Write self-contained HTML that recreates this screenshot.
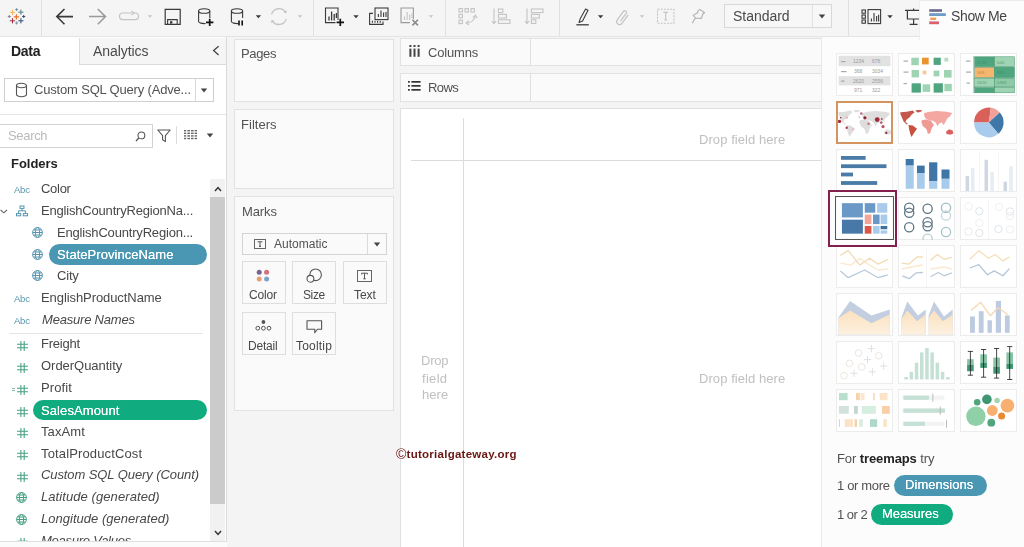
<!DOCTYPE html>
<html>
<head>
<meta charset="utf-8">
<title>Tableau - Treemap</title>
<style>
*{box-sizing:border-box;margin:0;padding:0}
html,body{width:1024px;height:547px;overflow:hidden;background:#f4f4f4;font-family:"Liberation Sans",sans-serif;color:#333;font-size:13px}
.abs{position:absolute}
.t{position:absolute;white-space:nowrap;line-height:16px;will-change:transform}
#toolbar{position:absolute;left:0;top:0;width:1024px;height:37px;background:#f5f5f5;border-bottom:1px solid #e4e4e4}
.tsep{position:absolute;top:0;width:1px;height:36px;background:#e0e0e0}
#left{position:absolute;left:0;top:37px;width:227px;height:505px;background:#fff;border-right:1px solid #dadada;border-bottom:1px solid #e0e0e0;overflow:hidden}
.card{position:absolute;background:#fafafa;border:1px solid #e2e2e2}
.mbtn{position:absolute;border:1px solid #dedede;background:#fafafa}
.pill{position:absolute;border-radius:11px}
</style>
</head>
<body>
<div id="toolbar">
<div class="tsep" style="left:41px"></div>
<div class="tsep" style="left:313px"></div>
<div class="tsep" style="left:445px"></div>
<div class="tsep" style="left:559px"></div>
<div class="tsep" style="left:848px"></div>
<svg class="abs" style="left:0;top:0" width="1024" height="38"><path d="M13.799999999999999,16.8 h5.2 M16.4,14.200000000000001 v5.2" stroke="#e8762c" stroke-width="1.2" fill="none"/><path d="M15.100000000000001,9.6 h3.0 M16.6,8.1 v3.0" stroke="#7b93a4" stroke-width="1" fill="none"/><path d="M15.100000000000001,23 h3.0 M16.6,21.5 v3.0" stroke="#7b93a4" stroke-width="1" fill="none"/><path d="M7.800000000000001,16.5 h3.0 M9.3,15.0 v3.0" stroke="#8a8098" stroke-width="1" fill="none"/><path d="M22.2,16.5 h3.0 M23.7,15.0 v3.0" stroke="#3a4a6a" stroke-width="1" fill="none"/><path d="M9.9,12.4 h5.2 M12.5,9.8 v5.2" stroke="#f0b860" stroke-width="1" fill="none"/><path d="M18.299999999999997,12.2 h5.2 M20.9,9.6 v5.2" stroke="#4f7f80" stroke-width="1" fill="none"/><path d="M9.9,20.8 h5.2 M12.5,18.2 v5.2" stroke="#9a3040" stroke-width="1" fill="none"/><path d="M18.299999999999997,20.8 h5.2 M20.9,18.2 v5.2" stroke="#2f4a6e" stroke-width="1" fill="none"/><path d="M73,16.6 H57 M64.5,9 L56.8,16.6 L64.5,24.2" fill="none" stroke="#3a3a3a" stroke-width="1.6"/><path d="M89,16.6 H105.2 M97.8,9 L105.5,16.6 L97.8,24.2" fill="none" stroke="#9a9a9a" stroke-width="1.5"/><rect x="119.5" y="13" width="19" height="6.6" rx="3.3" fill="none" stroke="#c4c4c4" stroke-width="1.2"/><path d="M131.5,10.8 l2.6,2.2 l-2.6,2.2" fill="none" stroke="#c4c4c4" stroke-width="1.1"/><path d="M147.8,15.200000000000001 h4.4 l-2.2,2.6 z" fill="#c4c4c4"/><path d="M165.2,9.3 h15 v15 h-15 z" fill="none" stroke="#3a3a3a" stroke-width="1.2"/><path d="M167.6,24 v-4.4 h9.6 v4.4" fill="none" stroke="#3a3a3a" stroke-width="1.1"/><rect x="170" y="21.2" width="2.4" height="2.4" fill="#3a3a3a"/><path d="M198.6,11 v10.5 a5.6,2.2 0 0 0 7,2" fill="none" stroke="#3a3a3a" stroke-width="1.1"/><path d="M209.79999999999998,11 v7" fill="none" stroke="#3a3a3a" stroke-width="1.1"/><ellipse cx="204.2" cy="11" rx="5.6" ry="2.3" fill="none" stroke="#3a3a3a" stroke-width="1.1"/><path d="M206,22.4 h7.4 M209.7,18.7 v7.4" stroke="#111" stroke-width="1.7" fill="none"/><path d="M231.4,11 v10.5 a5.6,2.2 0 0 0 7,2" fill="none" stroke="#3a3a3a" stroke-width="1.1"/><path d="M242.6,11 v7" fill="none" stroke="#3a3a3a" stroke-width="1.1"/><ellipse cx="237.0" cy="11" rx="5.6" ry="2.3" fill="none" stroke="#3a3a3a" stroke-width="1.1"/><path d="M239,20.4 v5.2 M242.2,20.4 v5.2" stroke="#111" stroke-width="1.6" fill="none"/><path d="M255.7,15.200000000000001 h5.4 l-2.7,3.1 z" fill="#3a3a3a"/><path d="M271.6,14.4 A7.6,7.6 0 0 1 285.6,12.6" fill="none" stroke="#c4c4c4" stroke-width="1.3"/><path d="M286.2,18.8 A7.6,7.6 0 0 1 272.2,20.6" fill="none" stroke="#c4c4c4" stroke-width="1.3"/><path d="M283.2,12 l3,1.4 l0.6,-3.2 z M274.6,21.2 l-3,-1.4 l-0.6,3.2 z" fill="#c4c4c4"/><path d="M297.8,15.200000000000001 h4.4 l-2.2,2.6 z" fill="#c4c4c4"/><path d="M338,20 V8 H325.5 V22.6 H335.5" fill="none" stroke="#3a3a3a" stroke-width="1.1"/><path d="M329,20.4 v-4 M331.6,20.4 v-9 M334.2,20.4 v-6.4 M336.4,18 v-5" stroke="#3a3a3a" stroke-width="1.3" fill="none"/><path d="M336.6,22.4 h7.4 M340.3,18.7 v7.4" stroke="#111" stroke-width="1.7" fill="none"/><path d="M353.3,15.200000000000001 h5.4 l-2.7,3.1 z" fill="#3a3a3a"/><rect x="375" y="8" width="13" height="11.6" fill="#f5f5f5" stroke="#3a3a3a" stroke-width="1.1"/><path d="M378.4,17 v-3 M381,17 v-6.4 M383.6,17 v-4.4 M386,17 v-5" stroke="#3a3a3a" stroke-width="1.1"/><path d="M373,13.4 h-3.4 v11 h13.4 v-3" fill="none" stroke="#3a3a3a" stroke-width="1.1"/><path d="M372.4,22.8 v-2 M375,22.8 v-2 M377.6,22.8 v-2 M380.2,22.8 v-2" stroke="#3a3a3a" stroke-width="1.1"/><path d="M413.4,19 V8 H401 V22.6 H410" fill="none" stroke="#9a9a9a" stroke-width="1.1"/><path d="M404.5,20 v-3.5 M407.1,20 v-8 M409.7,20 v-5.5 M412,18 v-4.5" stroke="#c4c4c4" stroke-width="1.1" fill="none"/><path d="M412.4,19.8 l5.6,5.6 M418,19.8 l-5.6,5.6" stroke="#8a8a8a" stroke-width="1.6" fill="none"/><path d="M428.8,15.200000000000001 h4.4 l-2.2,2.6 z" fill="#c4c4c4"/><g fill="none" stroke="#c4c4c4" stroke-width="1.1"><rect x="459" y="8.6" width="3.4" height="3.4"/><rect x="465" y="8.6" width="3.4" height="3.4"/><rect x="471" y="8.6" width="3.4" height="3.4"/><rect x="459" y="14.4" width="3.4" height="3.4"/><rect x="459" y="20.2" width="3.4" height="3.4"/><path d="M466.5,23 q7.5,-0.5 8.8,-7.5"/><path d="M472.8,17.6 l2.6,-2.4 l1.8,3 M468.8,20.6 l-2.6,2.4 l2.8,2"/></g><g fill="none" stroke="#c4c4c4" stroke-width="1.1"><path d="M494,8.6 V23.4 M491.8,21 l2.2,2.6 l2.2,-2.6"/><rect x="498.4" y="9" width="4.4" height="3.6"/><rect x="498.4" y="14.4" width="8" height="3.6"/><rect x="498.4" y="19.8" width="11.6" height="3.6"/></g><g fill="none" stroke="#c4c4c4" stroke-width="1.1"><path d="M527,8.6 V23.4 M524.8,21 l2.2,2.6 l2.2,-2.6"/><rect x="531.4" y="9" width="11.6" height="3.6"/><rect x="531.4" y="14.4" width="8" height="3.6"/><rect x="531.4" y="19.8" width="4.4" height="3.6"/></g><path d="M585.6,9 l2.4,1.2 l-5.4,10.8 l-3.6,1.4 l1.2,-3.6 z" fill="none" stroke="#3a3a3a" stroke-width="1.1" stroke-linejoin="round"/><path d="M576.4,24.8 h12.4" stroke="#3a3a3a" stroke-width="1.3"/><path d="M597.9,15.200000000000001 h5.4 l-2.7,3.1 z" fill="#3a3a3a"/><path d="M621.2,21.2 l4.6,-8.4 a1.7,1.7 0 0 0 -3,-1.6 l-5,9.2 a2.9,2.9 0 0 0 5.2,2.8 l5,-9.2" fill="none" stroke="#c4c4c4" stroke-width="1.2" transform="rotate(8 622 16)"/><path d="M639.8,15.200000000000001 h4.4 l-2.2,2.6 z" fill="#c4c4c4"/><rect x="657.5" y="9.2" width="16.4" height="14" fill="none" stroke="#c4c4c4" stroke-width="1.1" stroke-dasharray="2 1.2"/><path d="M663.4,12.4 h4.6 M665.7,12.4 v7.6 M664.2,20 h3" stroke="#c4c4c4" stroke-width="1.1" fill="none"/><path d="M699.8,9.4 l4.8,3.4 l-1.6,1 l-1.6,4.6 l-5.8,-0.4 l-2.4,-2.6 l4.2,-2.6 l0.8,-2.2 z M695.6,17.6 l-3.4,5.6" fill="none" stroke="#b0b0b0" stroke-width="1.1" stroke-linejoin="round"/><g fill="none" stroke="#3a3a3a" stroke-width="1.1"><rect x="862" y="10" width="3.4" height="3.2"/><rect x="862" y="15" width="3.4" height="3.2"/><rect x="862" y="20" width="3.4" height="3.2"/><rect x="868" y="9.6" width="12.6" height="14"/><path d="M871.4,21.4 v-3 M874,21.4 v-8.4 M876.6,21.4 v-5.4 M878.6,21.4 v-6.6"/></g><path d="M887.3,15.200000000000001 h5.4 l-2.7,3.1 z" fill="#3a3a3a"/><g fill="none" stroke="#3a3a3a" stroke-width="1.2"><path d="M905,10.4 h17 M907.4,10.4 v8.6 h14 M913.6,8.6 v1.8 M913.6,19 v5 M909.6,24.4 h8"/></g></svg>
<div class="abs" style="left:724px;top:4px;width:108px;height:24px;border:1px solid #d8d8d8;background:#f7f7f7"></div>
<div class="abs" style="left:812px;top:5px;width:1px;height:22px;background:#e2e2e2"></div>
<div class="t" style="left:732.7px;top:8.1px;font-size:14px;color:#4a4a4a;letter-spacing:-0.03px;">Standard</div>
<svg class="abs" style="left:818px;top:14.0px" width="8" height="5" viewBox="0 0 8 5"><path d="M0.8,0.4 h6.4 l-3.2,4 z" fill="#444"/></svg></div>
<div id="left">
<div class="abs" style="left:79px;top:1px;width:147px;height:27px;background:#f5f5f5;border-left:1px solid #dcdcdc;border-bottom:1px solid #dcdcdc"></div>
<div class="t" style="left:11.2px;top:5.9px;font-size:14px;color:#222;letter-spacing:-0.29px;font-weight:bold;">Data</div>
<div class="t" style="left:93.2px;top:5.9px;font-size:14px;color:#4a4a4a;letter-spacing:-0.06px;">Analytics</div>
<svg class="abs" style="left:211px;top:8px" width="10" height="12" viewBox="0 0 10 12"><path d="M7.6 1.2 L2.6 5.6 L7.6 10" fill="none" stroke="#444" stroke-width="1.3"/></svg>
<div class="abs" style="left:4px;top:41px;width:210px;height:24px;border:1px solid #cfcfcf;background:#fff"></div>
<div class="abs" style="left:195px;top:42px;width:1px;height:22px;background:#d8d8d8"></div>
<svg class="abs" style="left:15px;top:45px" width="13" height="16" viewBox="0 0 13 16"><path d="M1.5 3.5 v9 a5 2.2 0 0 0 10 0 v-9" fill="none" stroke="#555" stroke-width="1.1"/><ellipse cx="6.5" cy="3.5" rx="5" ry="2.2" fill="none" stroke="#555" stroke-width="1.1"/></svg>
<div class="t" style="left:33.7px;top:45.0px;font-size:13px;color:#525252;letter-spacing:-0.18px;">Custom SQL Query (Adve...</div>
<svg class="abs" style="left:200px;top:51.0px" width="8" height="5" viewBox="0 0 8 5"><path d="M0.8,0.4 h6.4 l-3.2,4 z" fill="#444"/></svg>
<div class="abs" style="left:0;top:77px;width:226px;height:1px;background:#e4e4e4"></div>
<div class="abs" style="left:-1px;top:87px;width:154px;height:24px;border:1px solid #d2d2d2;background:#fff"></div>
<div class="t" style="left:7.9px;top:90.8px;font-size:13px;color:#bababa;letter-spacing:-0.32px;">Search</div>
<svg class="abs" style="left:135px;top:94px" width="11" height="11" viewBox="0 0 11 11"><circle cx="6.4" cy="4.4" r="3.4" fill="none" stroke="#555" stroke-width="1.1"/><path d="M4 6.8 L1 10" stroke="#555" stroke-width="1.3"/></svg>
<svg class="abs" style="left:157px;top:91.5px" width="14" height="14" viewBox="0 0 14 14"><path d="M0.8 1 h12.4 l-4.8 5.6 v6 l-2.8 -1.8 v-4.2 z" fill="none" stroke="#555" stroke-width="1.1" stroke-linejoin="round"/></svg>
<div class="abs" style="left:176px;top:89px;width:1px;height:18px;background:#dcdcdc"></div>
<svg class="abs" style="left:184px;top:93.4px" width="13" height="10" viewBox="0 0 13 10"><g fill="#666"><rect x="0" y="0.0" width="2.2" height="1.4"/><rect x="3.4" y="0.0" width="2.6" height="1.4"/><rect x="7" y="0.0" width="2.6" height="1.4"/><rect x="10.6" y="0.0" width="2.4" height="1.4"/><rect x="0" y="2.6" width="2.2" height="1.4"/><rect x="3.4" y="2.6" width="2.6" height="1.4"/><rect x="7" y="2.6" width="2.6" height="1.4"/><rect x="10.6" y="2.6" width="2.4" height="1.4"/><rect x="0" y="5.2" width="2.2" height="1.4"/><rect x="3.4" y="5.2" width="2.6" height="1.4"/><rect x="7" y="5.2" width="2.6" height="1.4"/><rect x="10.6" y="5.2" width="2.4" height="1.4"/><rect x="0" y="7.800000000000001" width="2.2" height="1.4"/><rect x="3.4" y="7.800000000000001" width="2.6" height="1.4"/><rect x="7" y="7.800000000000001" width="2.6" height="1.4"/><rect x="10.6" y="7.800000000000001" width="2.4" height="1.4"/></g></svg>
<svg class="abs" style="left:206px;top:95.80000000000001px" width="8" height="5" viewBox="0 0 8 5"><path d="M0.8,0.4 h6.4 l-3.2,4 z" fill="#444"/></svg>
<div class="t" style="left:11.2px;top:119.3px;font-size:13px;color:#222;letter-spacing:-0.02px;font-weight:bold;">Folders</div>
<div class="abs" style="left:209.7px;top:142px;width:15px;height:363px;background:#f1f1f1"></div>
<div class="abs" style="left:209.7px;top:159.7px;width:15px;height:307.6px;background:#cbcbcb"></div>
<svg class="abs" style="left:213px;top:147.5px" width="10" height="8" viewBox="0 0 10 8"><path d="M2 6 L5 2.6 L8 6" fill="none" stroke="#333" stroke-width="1.5"/></svg>
<svg class="abs" style="left:213px;top:491.5px" width="10" height="8" viewBox="0 0 10 8"><path d="M2 2 L5 5.4 L8 2" fill="none" stroke="#333" stroke-width="1.5"/></svg>
<div class="t" style="left:13.9px;top:144.9px;font-size:9.5px;color:#5795ae;letter-spacing:-0.23px;">Abc</div>
<div class="t" style="left:41.1px;top:144.0px;font-size:13px;color:#484848;letter-spacing:-0.28px;">Color</div>
<svg class="abs" style="left:-0.5px;top:172.2px" width="8" height="6" viewBox="0 0 8 6"><path d="M0.6 1 L3.8 3.8 L7 1" fill="none" stroke="#666" stroke-width="1.1"/></svg>
<svg class="abs" style="left:15.5px;top:168.2px" width="12" height="12" viewBox="0 0 12 12"><g fill="none" stroke="#5795ae" stroke-width="1"><rect x="4" y="1" width="4" height="2.4"/><rect x="0.5" y="8.6" width="4.2" height="2.2"/><rect x="7.3" y="8.6" width="4.2" height="2.2"/><path d="M6 3.4 v2.4 M2.6 8.6 v-2.8 h6.8 v2.8"/></g></svg>
<div class="t" style="left:41.1px;top:165.8px;font-size:13px;color:#484848;letter-spacing:-0.19px;">EnglishCountryRegionNa...</div>
<svg class="abs" style="left:31.8px;top:189.9px" width="11" height="11" viewBox="0 0 11 11"><g fill="none" stroke="#5795ae" stroke-width="1"><circle cx="5.5" cy="5.5" r="4.9"/><ellipse cx="5.5" cy="5.5" rx="2.1" ry="4.9"/><path d="M0.6 5.5 h9.8 M1.5 3 h8 M1.5 8 h8"/></g></svg>
<div class="t" style="left:56.6px;top:187.5px;font-size:13px;color:#484848;letter-spacing:-0.18px;">EnglishCountryRegion...</div>
<div class="pill" style="left:49px;top:207.4px;width:158px;height:20.4px;background:#4a97b4"></div>
<svg class="abs" style="left:31.8px;top:211.9px" width="11" height="11" viewBox="0 0 11 11"><g fill="none" stroke="#5795ae" stroke-width="1"><circle cx="5.5" cy="5.5" r="4.9"/><ellipse cx="5.5" cy="5.5" rx="2.1" ry="4.9"/><path d="M0.6 5.5 h9.8 M1.5 3 h8 M1.5 8 h8"/></g></svg>
<div class="t" style="left:56.6px;top:209.5px;font-size:13px;color:#fff;letter-spacing:0.05px;text-shadow:0 0 0.4px #fff;">StateProvinceName</div>
<svg class="abs" style="left:31.8px;top:233.3px" width="11" height="11" viewBox="0 0 11 11"><g fill="none" stroke="#5795ae" stroke-width="1"><circle cx="5.5" cy="5.5" r="4.9"/><ellipse cx="5.5" cy="5.5" rx="2.1" ry="4.9"/><path d="M0.6 5.5 h9.8 M1.5 3 h8 M1.5 8 h8"/></g></svg>
<div class="t" style="left:56.6px;top:230.9px;font-size:13px;color:#484848;letter-spacing:-0.20px;">City</div>
<div class="t" style="left:13.9px;top:253.6px;font-size:9.5px;color:#5795ae;letter-spacing:-0.23px;">Abc</div>
<div class="t" style="left:41.1px;top:252.7px;font-size:13px;color:#484848;letter-spacing:-0.08px;">EnglishProductName</div>
<div class="t" style="left:13.9px;top:276.0px;font-size:9.5px;color:#5795ae;letter-spacing:-0.23px;">Abc</div>
<div class="t" style="left:41.5px;top:275.1px;font-size:13px;color:#484848;letter-spacing:-0.20px;font-style:italic;">Measure Names</div>
<svg class="abs" style="left:16.5px;top:303.9px" width="11" height="10" viewBox="0 0 11 10"><path d="M3.9 0 v10 M7.2 0 v10 M0 3.2 h11 M0 6.7 h11" fill="none" stroke="#45a081" stroke-width="1.05"/></svg>
<div class="t" style="left:41.1px;top:299.4px;font-size:13px;color:#484848;letter-spacing:-0.21px;">Freight</div>
<svg class="abs" style="left:16.5px;top:325.9px" width="11" height="10" viewBox="0 0 11 10"><path d="M3.9 0 v10 M7.2 0 v10 M0 3.2 h11 M0 6.7 h11" fill="none" stroke="#45a081" stroke-width="1.05"/></svg>
<div class="t" style="left:41.1px;top:321.4px;font-size:13px;color:#484848;letter-spacing:-0.03px;">OrderQuantity</div>
<div class="abs" style="left:12px;top:351.1px;width:2.8px;height:1px;background:#8ab8a8"></div>
<div class="abs" style="left:12px;top:353.1px;width:2.8px;height:1px;background:#8ab8a8"></div>
<svg class="abs" style="left:16.5px;top:347.5px" width="11" height="10" viewBox="0 0 11 10"><path d="M3.9 0 v10 M7.2 0 v10 M0 3.2 h11 M0 6.7 h11" fill="none" stroke="#45a081" stroke-width="1.05"/></svg>
<div class="t" style="left:41.1px;top:343.0px;font-size:13px;color:#484848;letter-spacing:0.08px;">Profit</div>
<div class="pill" style="left:33px;top:363.0px;width:174px;height:20.4px;background:#10ab7e"></div>
<svg class="abs" style="left:16.5px;top:370.3px" width="11" height="10" viewBox="0 0 11 10"><path d="M3.9 0 v10 M7.2 0 v10 M0 3.2 h11 M0 6.7 h11" fill="none" stroke="#45a081" stroke-width="1.05"/></svg>
<div class="t" style="left:40.9px;top:365.8px;font-size:13px;color:#fff;letter-spacing:0.10px;text-shadow:0 0 0.4px #fff;">SalesAmount</div>
<svg class="abs" style="left:16.5px;top:391.0px" width="11" height="10" viewBox="0 0 11 10"><path d="M3.9 0 v10 M7.2 0 v10 M0 3.2 h11 M0 6.7 h11" fill="none" stroke="#45a081" stroke-width="1.05"/></svg>
<div class="t" style="left:40.9px;top:386.5px;font-size:13px;color:#484848;letter-spacing:0.11px;">TaxAmt</div>
<svg class="abs" style="left:16.5px;top:413.1px" width="11" height="10" viewBox="0 0 11 10"><path d="M3.9 0 v10 M7.2 0 v10 M0 3.2 h11 M0 6.7 h11" fill="none" stroke="#45a081" stroke-width="1.05"/></svg>
<div class="t" style="left:40.9px;top:408.6px;font-size:13px;color:#484848;letter-spacing:0.14px;">TotalProductCost</div>
<svg class="abs" style="left:16.5px;top:434.7px" width="11" height="10" viewBox="0 0 11 10"><path d="M3.9 0 v10 M7.2 0 v10 M0 3.2 h11 M0 6.7 h11" fill="none" stroke="#45a081" stroke-width="1.05"/></svg>
<div class="t" style="left:41.4px;top:430.2px;font-size:13px;color:#484848;letter-spacing:-0.09px;font-style:italic;">Custom SQL Query (Count)</div>
<svg class="abs" style="left:16.2px;top:454.6px" width="11" height="11" viewBox="0 0 11 11"><g fill="none" stroke="#45a081" stroke-width="1"><circle cx="5.5" cy="5.5" r="4.9"/><ellipse cx="5.5" cy="5.5" rx="2.1" ry="4.9"/><path d="M0.6 5.5 h9.8 M1.5 3 h8 M1.5 8 h8"/></g></svg>
<div class="t" style="left:41.4px;top:452.2px;font-size:13px;color:#484848;letter-spacing:0.08px;font-style:italic;">Latitude (generated)</div>
<svg class="abs" style="left:16.2px;top:476.5px" width="11" height="11" viewBox="0 0 11 11"><g fill="none" stroke="#45a081" stroke-width="1"><circle cx="5.5" cy="5.5" r="4.9"/><ellipse cx="5.5" cy="5.5" rx="2.1" ry="4.9"/><path d="M0.6 5.5 h9.8 M1.5 3 h8 M1.5 8 h8"/></g></svg>
<div class="t" style="left:41.4px;top:474.1px;font-size:13px;color:#484848;letter-spacing:0.02px;font-style:italic;">Longitude (generated)</div>
<svg class="abs" style="left:16.5px;top:500.6px" width="11" height="10" viewBox="0 0 11 10"><path d="M3.9 0 v10 M7.2 0 v10 M0 3.2 h11 M0 6.7 h11" fill="none" stroke="#45a081" stroke-width="1.05"/></svg>
<div class="t" style="left:41.4px;top:496.1px;font-size:13px;color:#484848;letter-spacing:-0.25px;font-style:italic;">Measure Values</div>
<div class="abs" style="left:8.5px;top:296px;width:194px;height:1px;background:#e4e4e4"></div></div>
<div class="abs" style="left:0;top:542px;width:227px;height:5px;background:#fbfbfb"></div>
<div class="card" style="left:234px;top:39px;width:160px;height:63px"></div>
<div class="t" style="left:241.3px;top:45.5px;font-size:13px;color:#525252;letter-spacing:-0.35px;">Pages</div>
<div class="card" style="left:234px;top:109px;width:160px;height:80px"></div>
<div class="t" style="left:241.3px;top:116.5px;font-size:13px;color:#525252;letter-spacing:0.03px;">Filters</div>
<div class="card" style="left:234px;top:196px;width:160px;height:215px"></div>
<div class="t" style="left:241.8px;top:203.7px;font-size:13px;color:#525252;letter-spacing:-0.12px;">Marks</div>
<div class="abs" style="left:241.5px;top:233px;width:145px;height:21.5px;border:1px solid #d4d4d4;background:#fafafa"></div>
<div class="abs" style="left:366.5px;top:234px;width:1px;height:19.5px;background:#dadada"></div>
<svg class="abs" style="left:254px;top:239px" width="12" height="10" viewBox="0 0 12 10"><rect x="0.5" y="0.5" width="11" height="9" fill="none" stroke="#666" stroke-width="1"/><path d="M3.6 2.8 h4.8 M6 2.8 v4.6 M5 7.4 h2" stroke="#555" stroke-width="1" fill="none"/></svg>
<div class="t" style="left:273.5px;top:235.7px;font-size:12px;color:#525252;letter-spacing:0.02px;">Automatic</div>
<svg class="abs" style="left:372.7px;top:241.9px" width="8" height="5" viewBox="0 0 8 5"><path d="M0.8,0.4 h6.4 l-3.2,4 z" fill="#444"/></svg>
<div class="mbtn" style="left:241.5px;top:261px;width:44.5px;height:43px"></div>
<div class="mbtn" style="left:292px;top:261px;width:44px;height:43px"></div>
<div class="mbtn" style="left:342.5px;top:261px;width:44px;height:43px"></div>
<div class="mbtn" style="left:241.5px;top:311.5px;width:44.5px;height:43px"></div>
<div class="mbtn" style="left:292px;top:311.5px;width:44px;height:43px"></div>
<div class="t" style="left:248.6px;top:287.3px;font-size:12px;color:#484848;letter-spacing:-0.14px;">Color</div>
<div class="t" style="left:303.0px;top:287.3px;font-size:12px;color:#484848;letter-spacing:-0.39px;">Size</div>
<div class="t" style="left:353.7px;top:287.3px;font-size:12px;color:#484848;letter-spacing:-0.08px;">Text</div>
<div class="t" style="left:248.0px;top:337.6px;font-size:12px;color:#484848;letter-spacing:-0.20px;">Detail</div>
<div class="t" style="left:295.9px;top:337.6px;font-size:12px;color:#484848;letter-spacing:0.19px;">Tooltip</div>
<svg class="abs" style="left:256px;top:268.6px" width="14" height="13" viewBox="0 0 14 13"><circle cx="3.2" cy="3.2" r="2.5" fill="#74648f"/><circle cx="10.6" cy="3.2" r="2.5" fill="#d4717c"/><circle cx="3.2" cy="9.9" r="2.5" fill="#e8a070"/><circle cx="10.6" cy="9.9" r="2.5" fill="#7ba3cb"/></svg>
<svg class="abs" style="left:305.5px;top:267.5px" width="17" height="16" viewBox="0 0 17 16"><circle cx="9.6" cy="6.8" r="5.8" fill="none" stroke="#555" stroke-width="1.1"/><circle cx="4.4" cy="10.8" r="3.4" fill="#fafafa" stroke="#555" stroke-width="1.1"/></svg>
<svg class="abs" style="left:356.5px;top:269.5px" width="15" height="12" viewBox="0 0 15 12"><rect x="0.5" y="0.5" width="14" height="11" fill="none" stroke="#666" stroke-width="1"/><path d="M4.6 3.2 h5.8 M7.5 3.2 v5.6 M6.2 8.8 h2.6 M4.6 3.2 v1.2 M10.4 3.2 v1.2" stroke="#555" stroke-width="1" fill="none"/></svg>
<svg class="abs" style="left:254.5px;top:320px" width="17" height="11" viewBox="0 0 17 11"><circle cx="8.4" cy="2" r="1.9" fill="#555"/><circle cx="2.8" cy="8.2" r="1.9" fill="none" stroke="#555" stroke-width="1"/><circle cx="8.4" cy="8.2" r="1.9" fill="none" stroke="#555" stroke-width="1"/><circle cx="14" cy="8.2" r="1.9" fill="none" stroke="#555" stroke-width="1"/></svg>
<svg class="abs" style="left:305.5px;top:319.5px" width="17" height="14" viewBox="0 0 17 14"><path d="M1 0.8 h14.6 v8.4 h-4.2 l-2.6 3.6 v-3.6 h-7.8 z" fill="none" stroke="#555" stroke-width="1.1" stroke-linejoin="round"/></svg>
<div class="card" style="left:400px;top:38px;width:422px;height:28px"></div>
<div class="abs" style="left:530px;top:39px;width:1px;height:26px;background:#e0e0e0"></div>
<svg class="abs" style="left:408.6px;top:45.4px" width="11" height="12" viewBox="0 0 11 12"><g fill="#444"><rect x="0.4" y="0" width="2" height="2"/><rect x="4.5" y="0" width="2" height="2"/><rect x="8.6" y="0" width="2" height="2"/><rect x="0.4" y="3.6" width="2" height="8.2"/><rect x="4.5" y="3.6" width="2" height="8.2"/><rect x="8.6" y="3.6" width="2" height="8.2"/></g></svg>
<div class="t" style="left:427.8px;top:44.7px;font-size:13px;color:#525252;letter-spacing:-0.16px;">Columns</div>
<div class="card" style="left:400px;top:73px;width:422px;height:29px"></div>
<div class="abs" style="left:530px;top:74px;width:1px;height:27px;background:#e0e0e0"></div>
<svg class="abs" style="left:408px;top:81.4px" width="13" height="10" viewBox="0 0 13 10"><g fill="#333"><rect x="0" y="0" width="1.8" height="1.7"/><rect x="0" y="4" width="1.8" height="1.7"/><rect x="0" y="8" width="1.8" height="1.7"/><rect x="3.4" y="0" width="9.2" height="1.7"/><rect x="3.4" y="4" width="9.2" height="1.7"/><rect x="3.4" y="8" width="9.2" height="1.7"/></g></svg>
<div class="t" style="left:427.8px;top:79.9px;font-size:13px;color:#525252;letter-spacing:-0.58px;">Rows</div>
<div class="abs" style="left:400px;top:108px;width:422px;height:445px;background:#fff;border:1px solid #e0e0e0"></div>
<div class="abs" style="left:463px;top:118px;width:1px;height:429px;background:#dcdcdc"></div>
<div class="abs" style="left:411px;top:160px;width:410px;height:1px;background:#dcdcdc"></div>
<div class="t" style="left:698.5px;top:132.0px;font-size:13px;color:#c0c0c0;letter-spacing:0.07px;">Drop field here</div>
<div class="t" style="left:698.5px;top:370.8px;font-size:13px;color:#c0c0c0;letter-spacing:0.07px;">Drop field here</div>
<div class="t" style="left:420.9px;top:353.2px;font-size:13px;color:#c0c0c0;letter-spacing:-0.20px;">Drop</div>
<div class="t" style="left:422.1px;top:370.8px;font-size:13px;color:#c0c0c0;letter-spacing:0.31px;">field</div>
<div class="t" style="left:421.6px;top:387.1px;font-size:13px;color:#c0c0c0;letter-spacing:0.04px;">here</div>
<div class="t" style="left:396.0px;top:445.5px;font-size:11.5px;color:#6a1713;letter-spacing:0.26px;font-weight:bold;text-shadow:0 0 1.5px #fff,0 0 1.5px #fff;"><span style="font-weight:normal;font-size:14px;line-height:10px;position:relative;top:1px">©</span>tutorialgateway.org</div>
<div class="abs" style="left:821px;top:37px;width:203px;height:510px;background:#fcfcfc;border-left:1px solid #e9e9e9"></div>
<div class="abs" style="left:919px;top:0;width:105px;height:40px;background:#fcfcfc;border-top:1px solid #ebebeb;border-left:1px solid #efefef"></div>
<svg class="abs" style="left:928.5px;top:8.6px" width="18" height="16" viewBox="0 0 18 16"><rect x="0.2" y="0.2" width="12.8" height="2.6" fill="#6b6a8c"/><rect x="0.2" y="4.2" width="16.6" height="2.8" fill="#6c9bc8"/><rect x="1.2" y="8.6" width="6" height="2.4" fill="#e8a060"/><rect x="0.2" y="12.4" width="9.8" height="2.8" fill="#d9626e"/></svg>
<div class="t" style="left:951.2px;top:8.0px;font-size:14px;color:#444;letter-spacing:-0.37px;">Show Me</div>
<svg class="abs" style="left:836px;top:53px" width="57" height="43" viewBox="0 0 57 43" preserveAspectRatio="none"><rect x="0.5" y="0.5" width="56" height="42" fill="#fff" stroke="#ececec"/><rect x="2.6" y="2.8" width="51.8" height="10.4" fill="#e2e2e2"/><rect x="2.6" y="23.2" width="51.8" height="9.2" fill="#e2e2e2"/><g fill="#aaa"><rect x="5" y="8" width="4.5" height="1.2"/><rect x="5" y="18" width="5.5" height="1.2"/><rect x="5" y="27.5" width="3.5" height="1.2"/></g><g font-family="Liberation Sans, sans-serif" font-size="5" fill="#9a9a9a"><text x="17" y="10.4">1234</text><text x="36" y="10.4">678</text><text x="18" y="20">368</text><text x="36" y="20">3034</text><text x="17" y="29.6">2620</text><text x="36" y="29.6">2556</text><text x="18" y="38.6">971</text><text x="36" y="38.6">322</text></g></svg>
<svg class="abs" style="left:898px;top:53px" width="57" height="43" viewBox="0 0 57 43" preserveAspectRatio="none"><rect x="0.5" y="0.5" width="56" height="42" fill="#fff" stroke="#ececec"/><g fill="#aaa"><rect x="5.5" y="7.5" width="4.5" height="1.2"/><rect x="5.5" y="18.5" width="5" height="1.2"/><rect x="5.5" y="30" width="3.5" height="1.2"/></g><rect x="13.3" y="4.7" width="7.5" height="7.5" fill="#9fd4b2"/><rect x="24" y="4.7" width="6.7" height="6.7" fill="#e8952f"/><rect x="35.6" y="4.7" width="7.2" height="7.2" fill="#4fa57e"/><rect x="46.4" y="4.7" width="3.8" height="3.8" fill="#b5dcc3"/><rect x="13.6" y="17" width="7.4" height="7.4" fill="#9fd4b2"/><rect x="24.6" y="17.6" width="3.8" height="3.8" fill="#f6c99b"/><rect x="35.6" y="17.6" width="5.8" height="5.8" fill="#9fd4b2"/><rect x="46" y="17" width="7.6" height="7.6" fill="#9fd4b2"/><rect x="13.6" y="30.3" width="9.3" height="9.3" fill="#4fa57e"/><rect x="24.6" y="31.3" width="7.6" height="7.6" fill="#9fd4b2"/><rect x="35.6" y="30.3" width="9.3" height="9.3" fill="#4fa57e"/><rect x="46.4" y="30.8" width="7.4" height="7.4" fill="#9fd4b2"/></svg>
<svg class="abs" style="left:960px;top:53px" width="57" height="43" viewBox="0 0 57 43" preserveAspectRatio="none"><rect x="0.5" y="0.5" width="56" height="42" fill="#fff" stroke="#ececec"/><g fill="#aaa"><rect x="6" y="7.5" width="4.5" height="1.2"/><rect x="6" y="18.5" width="5" height="1.2"/><rect x="6.5" y="29.5" width="3.5" height="1.2"/></g><rect x="13" y="3" width="0.8" height="37" fill="#bbb"/><rect x="14.6" y="3.8" width="19.9" height="9.8" fill="#4fa57e" stroke="#3f8f6a" stroke-width="0.5"/><rect x="34.5" y="3.8" width="20" height="9.8" fill="#9fd4b2" stroke="#3f8f6a" stroke-width="0.5"/><rect x="14.6" y="14.2" width="19.9" height="10.4" fill="#f5b670" stroke="#3f8f6a" stroke-width="0.5"/><rect x="34.5" y="14.2" width="20" height="10.4" fill="#4fa57e" stroke="#3f8f6a" stroke-width="0.5"/><rect x="14.6" y="25.2" width="19.9" height="8.8" fill="#9fd4b2" stroke="#3f8f6a" stroke-width="0.5"/><rect x="34.5" y="25.2" width="20" height="8.8" fill="#8fcaa6" stroke="#3f8f6a" stroke-width="0.5"/><rect x="14.6" y="34.7" width="19.9" height="5.1" fill="#4fa57e" stroke="#3f8f6a" stroke-width="0.5"/><rect x="34.5" y="34.7" width="20" height="5.1" fill="#9fd4b2" stroke="#3f8f6a" stroke-width="0.5"/><g font-family="Liberation Sans, sans-serif" font-size="4.4" fill="#3f8a68" opacity="0.75"><text x="17" y="10.5">1234</text><text x="37" y="10.5">540</text><text x="37" y="21.2">980</text><text x="17" y="31.3">2620</text><text x="37" y="31.3">5365</text></g><text x="17" y="21.2" font-family="Liberation Sans, sans-serif" font-size="4.4" fill="#c98a45">368</text></svg>
<svg class="abs" style="left:836px;top:101px" width="57" height="43" viewBox="0 0 57 43" preserveAspectRatio="none"><rect x="0.5" y="0.5" width="56" height="42" fill="#fff" stroke="#ececec"/><path d="M2.4,11.3 L8.7,10.7 L14.7,9.5 L16.5,11.3 L13.5,13.7 L11.7,16.2 L8.7,18.6 L7.4,21 L9.9,22.8 L8.7,23.4 L5.6,20.4 L3.8,16.2 L2.4,13.1 Z" fill="#dedede"/><path d="M17.1,9.6 L20,8.9 L24.4,9.2 L22.5,11 L19.5,11.4 Z" fill="#dedede"/><path d="M10.5,24 L14.7,24.6 L19,27.7 L16.5,31.3 L13.5,36.1 L12.3,33.1 L11.1,28.3 Z" fill="#dedede"/><path d="M26.2,11.9 L31.7,10.7 L38.9,10.1 L48.6,10.7 L54.1,11.9 L52.3,15 L49.2,17.4 L47.4,21 L45.6,24 L43.8,21.6 L41.4,22.2 L39.5,25.2 L37.7,21.6 L34.7,19.8 L31.7,19.2 L28,18 L26.2,15 Z" fill="#dedede"/><path d="M23.8,19.2 L28,18.6 L32.9,19.8 L35.9,24 L33.5,27.7 L32.3,31.9 L29.9,33.1 L28.6,28.3 L25,25.2 L23.4,21.6 Z" fill="#dedede"/><path d="M0,0 Z" fill="#dedede"/><path d="M48,30.7 L51,28.3 L54.7,29.5 L55.3,32.5 L52.3,33.7 L48.6,33.1 Z" fill="#dedede"/><circle cx="3.5" cy="20.4" r="1.7" fill="#a02a3a"/><circle cx="4.7" cy="16.8" r="0.8" fill="#8c2030"/><circle cx="10.7" cy="16.8" r="1.2" fill="#e8b4b8"/><circle cx="25.3" cy="12.5" r="1.2" fill="#c06070"/><circle cx="23.4" cy="16.2" r="1" fill="#ecc0c4"/><circle cx="28.9" cy="16.8" r="1.6" fill="#8c2030"/><circle cx="32.5" cy="22.8" r="1.2" fill="#c87078"/><circle cx="41.2" cy="18.6" r="2.4" fill="#9e2a3a"/><circle cx="45.8" cy="18" r="1" fill="#c05060"/><circle cx="45.2" cy="21.6" r="1.2" fill="#c05060"/><circle cx="47" cy="25.6" r="1.6" fill="#c05060"/><circle cx="50.3" cy="31.9" r="1.1" fill="#8c2030"/><circle cx="10.7" cy="26.7" r="1.2" fill="#a83a48"/><circle cx="16.8" cy="28.3" r="1.4" fill="#ecc0c4"/><rect x="1" y="1" width="55" height="41" fill="none" stroke="#d3945f" stroke-width="2"/></svg>
<svg class="abs" style="left:898px;top:101px" width="57" height="43" viewBox="0 0 57 43" preserveAspectRatio="none"><rect x="0.5" y="0.5" width="56" height="42" fill="#fff" stroke="#ececec"/><path d="M2.4,11.3 L8.7,10.7 L14.7,9.5 L16.5,11.3 L13.5,13.7 L11.7,16.2 L8.7,18.6 L7.4,21 L9.9,22.8 L8.7,23.4 L5.6,20.4 L3.8,16.2 L2.4,13.1 Z" fill="#c4574e"/><path d="M17.1,9.6 L20,8.9 L24.4,9.2 L22.5,11 L19.5,11.4 Z" fill="#c4574e"/><path d="M10.5,24 L14.7,24.6 L19,27.7 L16.5,31.3 L13.5,36.1 L12.3,33.1 L11.1,28.3 Z" fill="#c8503f"/><path d="M26.2,11.9 L31.7,10.7 L38.9,10.1 L48.6,10.7 L54.1,11.9 L52.3,15 L49.2,17.4 L47.4,21 L45.6,24 L43.8,21.6 L41.4,22.2 L39.5,25.2 L37.7,21.6 L34.7,19.8 L31.7,19.2 L28,18 L26.2,15 Z" fill="#f4a6a0"/><path d="M23.8,19.2 L28,18.6 L32.9,19.8 L35.9,24 L33.5,27.7 L32.3,31.9 L29.9,33.1 L28.6,28.3 L25,25.2 L23.4,21.6 Z" fill="#f09a94"/><path d="M0,0 Z" fill="#f4aaa4"/><path d="M48,30.7 L51,28.3 L54.7,29.5 L55.3,32.5 L52.3,33.7 L48.6,33.1 Z" fill="#d9605a"/></svg>
<svg class="abs" style="left:960px;top:101px" width="57" height="43" viewBox="0 0 57 43" preserveAspectRatio="none"><rect x="0.5" y="0.5" width="56" height="42" fill="#fff" stroke="#ececec"/><path d="M28.8,21.4 L14.00,21.40 A14.8,14.8 0 0 1 30.86,6.74 Z" fill="#d9615a"/><path d="M28.8,21.4 L30.86,6.74 A14.8,14.8 0 0 1 39.80,11.50 Z" fill="#f2a09b"/><path d="M28.8,21.4 L39.80,11.50 A14.8,14.8 0 0 1 38.31,32.74 Z" fill="#3f78a8"/><path d="M28.8,21.4 L38.31,32.74 A14.8,14.8 0 0 1 14.00,21.40 Z" fill="#a9ccec"/></svg>
<svg class="abs" style="left:836px;top:149px" width="57" height="43" viewBox="0 0 57 43" preserveAspectRatio="none"><rect x="0.5" y="0.5" width="56" height="42" fill="#fff" stroke="#ececec"/><rect x="5" y="7" width="24.6" height="3.8" fill="#4a7ba6"/><rect x="5" y="15.3" width="45.5" height="3.8" fill="#4a7ba6"/><rect x="5" y="23.6" width="12" height="3.8" fill="#4a7ba6"/><rect x="5" y="32.1" width="36.2" height="3.8" fill="#4a7ba6"/></svg>
<svg class="abs" style="left:898px;top:149px" width="57" height="43" viewBox="0 0 57 43" preserveAspectRatio="none"><rect x="0.5" y="0.5" width="56" height="42" fill="#fff" stroke="#ececec"/><rect x="7.7" y="10" width="8" height="6.600000000000001" fill="#3f76a6"/><rect x="7.7" y="16.6" width="8" height="23.199999999999996" fill="#a9cbeb"/><rect x="19" y="16.6" width="7.7" height="7.399999999999999" fill="#3f76a6"/><rect x="19" y="24" width="7.7" height="15.799999999999997" fill="#a9cbeb"/><rect x="31.1" y="13.3" width="8.2" height="18.999999999999996" fill="#3f76a6"/><rect x="31.1" y="32.3" width="8.2" height="7.5" fill="#a9cbeb"/><rect x="43.5" y="20.5" width="8" height="9.3" fill="#3f76a6"/><rect x="43.5" y="29.8" width="8" height="9.999999999999996" fill="#a9cbeb"/></svg>
<svg class="abs" style="left:960px;top:149px" width="57" height="43" viewBox="0 0 57 43" preserveAspectRatio="none"><rect x="0.5" y="0.5" width="56" height="42" fill="#fff" stroke="#ececec"/><rect x="19.3" y="2" width="0.6" height="40" fill="#eee"/><rect x="38" y="2" width="0.6" height="40" fill="#eee"/><rect x="5.6" y="27" width="3.5" height="15" fill="#cfd8e2"/><rect x="11" y="19" width="3.5" height="23" fill="#e6edf5"/><rect x="24.5" y="10.8" width="3.5" height="31.2" fill="#cfd8e2"/><rect x="30.4" y="23" width="3.5" height="19" fill="#e6edf5"/><rect x="43.5" y="32.7" width="3.5" height="9.299999999999997" fill="#cfd8e2"/><rect x="49.3" y="17.2" width="3.5" height="24.8" fill="#e6edf5"/></svg>
<svg class="abs" style="left:835px;top:196px" width="59" height="44" viewBox="0 0 57 43" preserveAspectRatio="none"><rect x="0.5" y="0.5" width="56" height="42" fill="#fff" stroke="#ececec"/><rect x="6.70" y="7.00" width="20.24" height="13.94" fill="#6a98c7"/><rect x="6.70" y="23.15" width="20.24" height="13.65" fill="#4878a8"/><rect x="28.74" y="7.00" width="10.17" height="9.32" fill="#6a98c7"/><rect x="40.71" y="7.00" width="9.79" height="9.32" fill="#a9cbeb"/><rect x="28.74" y="18.15" width="6.46" height="9.32" fill="#f4a59a"/><rect x="36.72" y="18.15" width="6.37" height="9.32" fill="#6a98c7"/><rect x="44.04" y="18.15" width="6.46" height="9.32" fill="#a9cbeb"/><rect x="28.74" y="29.30" width="6.46" height="7.50" fill="#d9564a"/><rect x="36.72" y="29.30" width="6.37" height="7.50" fill="#a9cbeb"/><rect x="44.04" y="29.30" width="6.46" height="3.17" fill="#3f6f9c"/><rect x="44.04" y="33.63" width="6.46" height="3.17" fill="#a9cbeb"/><rect x="0.5" y="0.5" width="56" height="42" fill="none" stroke="#555" stroke-width="1"/></svg>
<svg class="abs" style="left:898px;top:197px" width="57" height="43" viewBox="0 0 57 43" preserveAspectRatio="none"><rect x="0.5" y="0.5" width="56" height="42" fill="#fff" stroke="#ececec"/><circle cx="11.2" cy="10.8" r="4.6" fill="none" stroke="#5b7685" stroke-width="1.3"/><circle cx="11.2" cy="15.7" r="4.6" fill="none" stroke="#5b7685" stroke-width="1.3"/><circle cx="11.2" cy="30.2" r="4.6" fill="none" stroke="#5b7685" stroke-width="1.3"/><circle cx="29.6" cy="11.8" r="4.6" fill="none" stroke="#5b7685" stroke-width="1.3"/><circle cx="29.6" cy="25.3" r="4.6" fill="none" stroke="#5b7685" stroke-width="1.3"/><circle cx="29.6" cy="29.2" r="4.6" fill="none" stroke="#5b7685" stroke-width="1.3"/><circle cx="29.6" cy="41.8" r="4.6" fill="none" stroke="#b8cdd2" stroke-width="1.3"/><circle cx="48" cy="10.8" r="4.6" fill="none" stroke="#9fbcc4" stroke-width="1.3"/><circle cx="48" cy="18.6" r="4.6" fill="none" stroke="#c5d8dc" stroke-width="1.3"/><circle cx="48" cy="35" r="4.6" fill="none" stroke="#a8c4ca" stroke-width="1.3"/></svg>
<svg class="abs" style="left:960px;top:197px" width="57" height="43" viewBox="0 0 57 43" preserveAspectRatio="none"><rect x="0.5" y="0.5" width="56" height="42" fill="#fff" stroke="#ececec"/><rect x="28.3" y="2" width="0.6" height="40" fill="#eee"/><circle cx="8.5" cy="9.5" r="3.7" fill="none" stroke="#eef0f2" stroke-width="1"/><circle cx="19.3" cy="14.3" r="3.7" fill="none" stroke="#dfe5ea" stroke-width="1"/><circle cx="19.3" cy="26" r="3.7" fill="none" stroke="#f0f2f4" stroke-width="1"/><circle cx="8.5" cy="34.5" r="3.7" fill="none" stroke="#e8ecef" stroke-width="1"/><circle cx="19.3" cy="36" r="3.7" fill="none" stroke="#dfe5ea" stroke-width="1"/><circle cx="39" cy="10" r="3.7" fill="none" stroke="#f0f2f4" stroke-width="1"/><circle cx="50" cy="14.5" r="3.7" fill="none" stroke="#dfe5ea" stroke-width="1"/><circle cx="50" cy="19" r="3.7" fill="none" stroke="#eceff2" stroke-width="1"/><circle cx="38.5" cy="32" r="3.7" fill="none" stroke="#dfe5ea" stroke-width="1"/><circle cx="50" cy="32.5" r="3.7" fill="none" stroke="#eceff2" stroke-width="1"/></svg>
<svg class="abs" style="left:836px;top:245px" width="57" height="43" viewBox="0 0 57 43" preserveAspectRatio="none"><rect x="0.5" y="0.5" width="56" height="42" fill="#fff" stroke="#ececec"/><polyline points="4.4,18.2 15,20.1 23.8,13.3 33.5,20.1 42.2,25 51.8,24" fill="none" stroke="#fae9cf" stroke-width="1.3" stroke-linejoin="round"/><polyline points="4.4,10.4 12.2,5.6 23.8,20.1 33.5,13.3 42.2,19.1 51.8,14.3" fill="none" stroke="#f2dcb6" stroke-width="1.3" stroke-linejoin="round"/><polyline points="4.4,25.9 12.2,32.7 28.6,25 42.2,32.7 51.8,29.8" fill="none" stroke="#b9c9d9" stroke-width="1.3" stroke-linejoin="round"/></svg>
<svg class="abs" style="left:898px;top:245px" width="57" height="43" viewBox="0 0 57 43" preserveAspectRatio="none"><rect x="0.5" y="0.5" width="56" height="42" fill="#fff" stroke="#ececec"/><rect x="28.3" y="2" width="0.6" height="40" fill="#eee"/><polyline points="3.5,24 13.2,22 24.8,20" fill="none" stroke="#fae9cf" stroke-width="1.3" stroke-linejoin="round"/><polyline points="3.5,18.2 11.2,19.1 19,12 24.8,12" fill="none" stroke="#f2dcb6" stroke-width="1.3" stroke-linejoin="round"/><polyline points="4.4,30.8 11.2,33.7 18,27.9 24.8,27.5" fill="none" stroke="#b9c9d9" stroke-width="1.3" stroke-linejoin="round"/><polyline points="32.5,24 39.3,23 46,22 53.8,24" fill="none" stroke="#fae9cf" stroke-width="1.3" stroke-linejoin="round"/><polyline points="32.5,15.3 39.3,9.5 46,14.3 53.8,12.4" fill="none" stroke="#f2dcb6" stroke-width="1.3" stroke-linejoin="round"/><polyline points="32.5,31.7 40.2,27.5 46,30.8 53.8,27.9" fill="none" stroke="#b9c9d9" stroke-width="1.3" stroke-linejoin="round"/></svg>
<svg class="abs" style="left:960px;top:245px" width="57" height="43" viewBox="0 0 57 43" preserveAspectRatio="none"><rect x="0.5" y="0.5" width="56" height="42" fill="#fff" stroke="#ececec"/><polyline points="10,14.3 18.8,5.6 28.4,13.3 35.2,9.5 43,15.9 49.3,12" fill="none" stroke="#f5dfba" stroke-width="1.3" stroke-linejoin="round"/><polyline points="10,23 18.8,19.7 27.5,29.8 34.2,25.9 43,30.8 49.3,23.6" fill="none" stroke="#b3c5d8" stroke-width="1.3" stroke-linejoin="round"/></svg>
<svg class="abs" style="left:836px;top:293px" width="57" height="43" viewBox="0 0 57 43" preserveAspectRatio="none"><rect x="0.5" y="0.5" width="56" height="42" fill="#fff" stroke="#ececec"/><defs><linearGradient id="go" x1="0" y1="0" x2="0" y2="1"><stop offset="0" stop-color="#fbe0bd"/><stop offset="1" stop-color="#fdf1e0"/></linearGradient></defs><polygon points="2.5,24.4 14.1,7.9 35.4,22.4 53.8,16.6 53.8,41.8 2.5,41.8" fill="#c3cfe1"/><polygon points="2.5,25.3 14.1,17.6 35.4,30.2 53.8,21.5 53.8,41.8 2.5,41.8" fill="url(#go)"/></svg>
<svg class="abs" style="left:898px;top:293px" width="57" height="43" viewBox="0 0 57 43" preserveAspectRatio="none"><rect x="0.5" y="0.5" width="56" height="42" fill="#fff" stroke="#ececec"/><polygon points="3.5,24.4 9.3,8.5 19.9,22.4 27.7,16.6 27.7,41.8 3.5,41.8" fill="#c3cfe1"/><polygon points="3.5,26.3 9.3,17.6 19,28.2 27.7,21.5 27.7,41.8 3.5,41.8" fill="url(#go)"/><polygon points="30.6,22.4 36,8.5 46,23.4 54.7,16.6 54.7,41.8 30.6,41.8" fill="#c3cfe1"/><polygon points="30.6,24.4 36,17.6 45,28.2 54.7,21.5 54.7,41.8 30.6,41.8" fill="url(#go)"/></svg>
<svg class="abs" style="left:960px;top:293px" width="57" height="43" viewBox="0 0 57 43" preserveAspectRatio="none"><rect x="0.5" y="0.5" width="56" height="42" fill="#fff" stroke="#ececec"/><rect x="10" y="23.4" width="4.9" height="16.4" fill="#bccbe0"/><rect x="18.8" y="18.2" width="4.8" height="21.6" fill="#bccbe0"/><rect x="27.5" y="27.3" width="4.4" height="12.5" fill="#bccbe0"/><rect x="35.8" y="7.9" width="5.2" height="31.9" fill="#bccbe0"/><rect x="44.9" y="22.4" width="4.8" height="17.4" fill="#bccbe0"/><polyline points="11,17.6 20.7,9.3 30.4,22.8 38.1,14.7 47.8,21.5" fill="none" stroke="#f5d8b2" stroke-width="1.3" stroke-linejoin="round"/></svg>
<svg class="abs" style="left:836px;top:341px" width="57" height="43" viewBox="0 0 57 43" preserveAspectRatio="none"><rect x="0.5" y="0.5" width="56" height="42" fill="#fff" stroke="#ececec"/><circle cx="22.4" cy="12" r="3.3" fill="none" stroke="#eee6dc" stroke-width="1"/><circle cx="42.6" cy="14.7" r="3.3" fill="none" stroke="#eee6dc" stroke-width="1"/><circle cx="13.5" cy="22.4" r="3.3" fill="none" stroke="#eee6dc" stroke-width="1"/><circle cx="25.7" cy="25.9" r="3.3" fill="none" stroke="#eee6dc" stroke-width="1"/><circle cx="7.9" cy="34.6" r="3.3" fill="none" stroke="#eee6dc" stroke-width="1"/><path d="M31.799999999999997,7.5 h7.2 M35.4,3.9 v7.2" stroke="#d9dfdf" stroke-width="0.9" fill="none"/><path d="M27.9,18.6 h7.2 M31.5,15.000000000000002 v7.2" stroke="#d9dfdf" stroke-width="0.9" fill="none"/><path d="M44.0,25 h7.2 M47.6,21.4 v7.2" stroke="#d9dfdf" stroke-width="0.9" fill="none"/><path d="M32.8,30.8 h7.2 M36.4,27.2 v7.2" stroke="#d9dfdf" stroke-width="0.9" fill="none"/><path d="M14.4,32.3 h7.2 M18,28.699999999999996 v7.2" stroke="#d9dfdf" stroke-width="0.9" fill="none"/></svg>
<svg class="abs" style="left:898px;top:341px" width="57" height="43" viewBox="0 0 57 43" preserveAspectRatio="none"><rect x="0.5" y="0.5" width="56" height="42" fill="#fff" stroke="#ececec"/><rect x="6.4" y="36" width="3.5" height="2.5" fill="#c5e0d5"/><rect x="11.6" y="30.8" width="3.5" height="7.7" fill="#c5e0d5"/><rect x="16.8" y="21.7" width="3.5" height="16.8" fill="#c5e0d5"/><rect x="22.0" y="11.4" width="3.5" height="27.1" fill="#c5e0d5"/><rect x="27.2" y="7" width="3.5" height="31.5" fill="#c5e0d5"/><rect x="32.4" y="11.4" width="3.5" height="27.1" fill="#c5e0d5"/><rect x="37.6" y="21.7" width="3.5" height="16.8" fill="#c5e0d5"/><rect x="42.8" y="30.8" width="3.5" height="7.7" fill="#c5e0d5"/><rect x="48.0" y="36" width="3.5" height="2.5" fill="#c5e0d5"/></svg>
<svg class="abs" style="left:960px;top:341px" width="57" height="43" viewBox="0 0 57 43" preserveAspectRatio="none"><rect x="0.5" y="0.5" width="56" height="42" fill="#fff" stroke="#ececec"/><rect x="7.1000000000000005" y="18.2" width="6.6" height="5.8" fill="#86c4a5"/><rect x="7.1000000000000005" y="24" width="6.6" height="6.2" fill="#3f9672"/><path d="M10.4,10.4 V34.2 M7.800000000000001,10.4 h5.2 M7.800000000000001,34.2 h5.2" stroke="#1a1a1a" stroke-width="0.8" fill="none"/><rect x="20.3" y="13.3" width="6.6" height="8.7" fill="#86c4a5"/><rect x="20.3" y="22" width="6.6" height="4.9" fill="#3f9672"/><path d="M23.6,8.5 V36.2 M21.0,8.5 h5.2 M21.0,36.2 h5.2" stroke="#1a1a1a" stroke-width="0.8" fill="none"/><rect x="33.300000000000004" y="16.6" width="6.6" height="9.3" fill="#86c4a5"/><rect x="33.300000000000004" y="25.9" width="6.6" height="6.8" fill="#3f9672"/><path d="M36.6,7.5 V37.1 M34.0,7.5 h5.2 M34.0,37.1 h5.2" stroke="#1a1a1a" stroke-width="0.8" fill="none"/><rect x="46.400000000000006" y="11.4" width="6.6" height="11.6" fill="#86c4a5"/><rect x="46.400000000000006" y="23" width="6.6" height="4.9" fill="#3f9672"/><path d="M49.7,5.6 V38.5 M47.1,5.6 h5.2 M47.1,38.5 h5.2" stroke="#1a1a1a" stroke-width="0.8" fill="none"/></svg>
<svg class="abs" style="left:836px;top:389px" width="57" height="43" viewBox="0 0 57 43" preserveAspectRatio="none"><rect x="0.5" y="0.5" width="56" height="42" fill="#fff" stroke="#ececec"/><rect x="3" y="4" width="8.6" height="7.2" fill="#b9dfcf"/><rect x="20" y="4" width="3.8" height="7.2" fill="#f5d2b0"/><rect x="24.5" y="4" width="4.0" height="7.2" fill="#fbe6d0"/><rect x="37.3" y="4" width="1.4" height="7.2" fill="#f5d2b0"/><rect x="43.7" y="4" width="7.8" height="7.2" fill="#fbe3c8"/><rect x="3" y="17" width="9.8" height="7.8" fill="#d3e3dc"/><rect x="18" y="17" width="3.9" height="7.8" fill="#c5d5d0"/><rect x="25.7" y="17" width="14.1" height="7.8" fill="#d5eee0"/><rect x="46" y="17" width="7.8" height="7.8" fill="#f8cfa8"/><rect x="3" y="30.2" width="0.9" height="7.7" fill="#c5d5dc"/><rect x="8.7" y="30.2" width="8.3" height="7.7" fill="#fbe3c8"/><rect x="18.5" y="30.2" width="2.5" height="7.7" fill="#f5d2b0"/><rect x="23.2" y="30.2" width="3.5" height="7.7" fill="#d5eee0"/><rect x="34" y="30.2" width="7.2" height="7.7" fill="#b0d8c8"/><rect x="47.4" y="30.2" width="3.5" height="7.7" fill="#fbe3c8"/></svg>
<svg class="abs" style="left:898px;top:389px" width="57" height="43" viewBox="0 0 57 43" preserveAspectRatio="none"><rect x="0.5" y="0.5" width="56" height="42" fill="#fff" stroke="#ececec"/><rect x="5.4" y="6.6" width="41" height="4.2" fill="#f3f3f3"/><rect x="5.4" y="6.6" width="25.6" height="4.2" fill="#c5e0d5"/><rect x="34.4" y="4.6" width="0.9" height="8.2" fill="#b5b5b5"/><rect x="5.4" y="19.5" width="41" height="4.3" fill="#f3f3f3"/><rect x="5.4" y="19.5" width="41.6" height="4.3" fill="#c5e0d5"/><rect x="41.800000000000004" y="17.5" width="0.9" height="8.3" fill="#b5b5b5"/><rect x="5.4" y="32.7" width="41" height="4.2" fill="#f3f3f3"/><rect x="5.4" y="32.7" width="21.6" height="4.2" fill="#c5e0d5"/><rect x="48.0" y="30.700000000000003" width="0.9" height="8.2" fill="#b5b5b5"/></svg>
<svg class="abs" style="left:960px;top:389px" width="57" height="43" viewBox="0 0 57 43" preserveAspectRatio="none"><rect x="0.5" y="0.5" width="56" height="42" fill="#fff" stroke="#ececec"/><circle cx="15.9" cy="27.3" r="9.7" fill="#8fd0a8"/><circle cx="26.9" cy="10.4" r="4.8" fill="#3f9672"/><circle cx="17.2" cy="13.3" r="3.3" fill="#4fa57e"/><circle cx="37.1" cy="11.4" r="2.7" fill="#9fd4b2"/><circle cx="47.4" cy="16.6" r="6.8" fill="#f8b070"/><circle cx="32.3" cy="21.5" r="5.4" fill="#f8b070"/><circle cx="41.6" cy="26.9" r="3.5" fill="#e88a30"/><circle cx="31.3" cy="33.7" r="3.9" fill="#4fa57e"/></svg>
<div class="abs" style="left:828px;top:190px;width:69px;height:57px;border:2px solid #84204e"></div>
<div class="t" style="left:837.4px;top:451.1px;font-size:13px;color:#525252;letter-spacing:-0.10px;">For <b style="color:#222">treemaps</b> try</div>
<div class="t" style="left:837.4px;top:477.9px;font-size:13px;color:#525252;letter-spacing:-0.34px;">1 or more</div>
<div class="pill" style="left:894px;top:474.5px;width:93px;height:21px;background:#4a97b4"></div>
<div class="t" style="left:904.7px;top:476.9px;font-size:13px;color:#fff;letter-spacing:0.05px;text-shadow:0 0 0.4px #fff;">Dimensions</div>
<div class="t" style="left:837.4px;top:506.8px;font-size:13px;color:#525252;letter-spacing:-0.51px;">1 or 2</div>
<div class="pill" style="left:870.6px;top:503.8px;width:82px;height:21px;background:#10ab7e"></div>
<div class="t" style="left:882.2px;top:505.9px;font-size:13px;color:#fff;letter-spacing:-0.06px;text-shadow:0 0 0.4px #fff;">Measures</div>
</body>
</html>
